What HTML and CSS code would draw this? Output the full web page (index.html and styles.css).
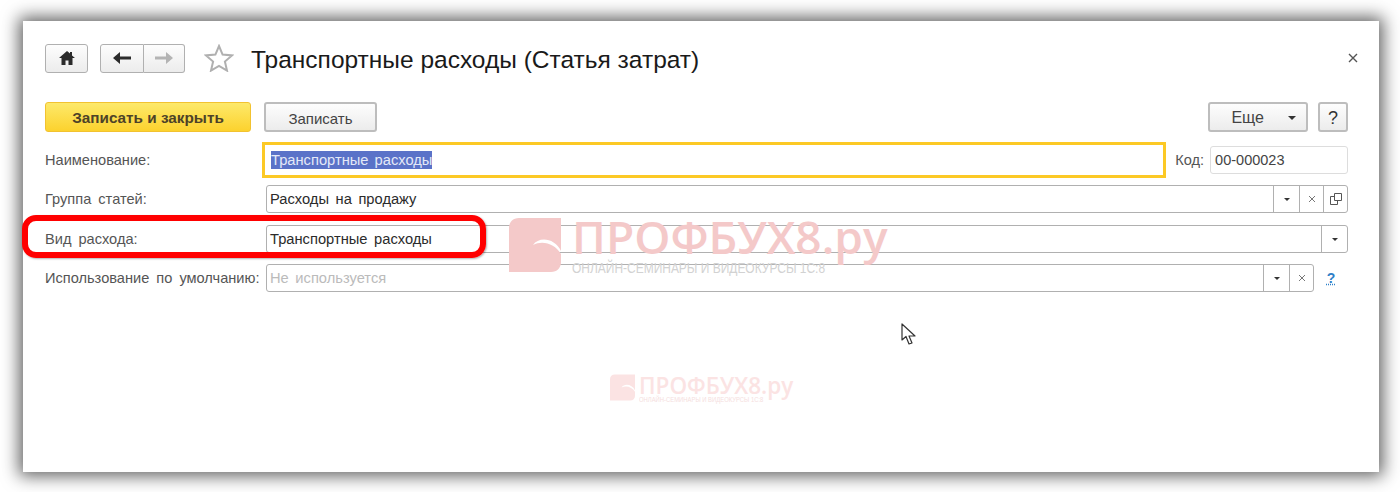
FILE: index.html
```html
<!DOCTYPE html>
<html lang="en">
<head>
  <meta charset="UTF-8">
  <title>Транспортные расходы</title>
  <link rel="stylesheet" href="styles.css">
</head>
<body>
  <div class="window">
    <!-- Title bar -->
    <div class="titlebar">
      <button class="nav-btn home">
        <svg width="16" height="14" viewBox="0 0 16 14"><path d="M8 0 L11 2.6 V1 H13 V4.4 L16 7 H13.5 V14 H9.5 V9.5 H6.5 V14 H2.5 V7 H0 Z" fill="#2b2b2b"/></svg>
      </button>
      <div class="nav-group">
        <button class="nav-btn">
          <svg width="18" height="14" viewBox="0 0 18 14"><path d="M0 7 L7 1 V5.4 H18 V8.6 H7 V13 Z" fill="#2b2b2b"/></svg>
        </button>
        <button class="nav-btn">
          <svg width="18" height="14" viewBox="0 0 18 14"><path d="M18 7 L11 1 V5.4 H0 V8.6 H11 V13 Z" fill="#b4b4b4"/></svg>
        </button>
      </div>
      <svg class="star" width="30" height="28" viewBox="0 0 30 28"><path d="M15 2 L18.6 10.6 L28 11.4 L20.9 17.5 L23 26.6 L15 21.8 L7 26.6 L9.1 17.5 L2 11.4 L11.4 10.6 Z" fill="#fff" stroke="#b0b0b0" stroke-width="2"/></svg>
      <h1 class="title">Транспортные расходы (Статья затрат)</h1>
      <svg class="close" width="10" height="10" viewBox="0 0 10 10"><path d="M1 1 L9 9 M9 1 L1 9" stroke="#555" stroke-width="1.4"/></svg>
    </div>

    <!-- Command bar -->
    <div class="commands">
      <button class="cmd primary">Записать и закрыть</button>
      <button class="cmd save">Записать</button>
      <button class="cmd more">Еще <span class="arrow"></span></button>
      <button class="cmd help">?</button>
    </div>

    <!-- Form -->
    <div class="form">
      <div class="row first">
        <label>Наименование:</label>
        <div class="focus-field"><span class="selected">Транспортные расходы</span></div>
        <label class="code-label">Код:</label>
        <div class="code-field">00-000023</div>
      </div>
      <div class="row">
        <label>Группа статей:</label>
        <div class="field">
          <span class="value">Расходы на продажу</span>
          <span class="fbtn"><span class="arrow small"></span></span>
          <span class="fbtn narrow"><svg width="8" height="8" viewBox="0 0 8 8"><path d="M1 1 L7 7 M7 1 L1 7" stroke="#777"/></svg></span>
          <span class="fbtn narrow"><svg width="12" height="12" viewBox="0 0 12 12"><path d="M4.5 .5 H11.5 V7.5 H4.5 Z M4.5 3.5 H.5 V11.5 H7.5 V7.5" fill="none" stroke="#555"/></svg></span>
        </div>
      </div>
      <div class="row kind">
        <label>Вид расхода:</label>
        <div class="field">
          <span class="value">Транспортные расходы</span>
          <span class="fbtn"><span class="arrow small"></span></span>
        </div>
      </div>
      <div class="row">
        <label>Использование по умолчанию:</label>
        <div class="field">
          <span class="value placeholder">Не используется</span>
          <span class="fbtn"><span class="arrow small"></span></span>
          <span class="fbtn narrow"><svg width="8" height="8" viewBox="0 0 8 8"><path d="M1 1 L7 7 M7 1 L1 7" stroke="#777"/></svg></span>
        </div>
        <a class="hint">?</a>
      </div>
    </div>

    <!-- Overlays -->
    <div class="highlight"></div>
    <div class="mark big">
      <svg width="52" height="54" viewBox="0 0 52 54"><path d="M10 0 H52 V33 C46 20 30 18 24 27 C34 22 46 26 52 36 V44 C52 50 48 54 42 54 H0 V10 C0 4 4 0 10 0 Z" fill="#f4c9c9"/></svg>
      <div class="mark-text">
        <div class="mark-name">ПРОФБУХ8.ру</div>
        <div class="mark-sub">ОНЛАЙН-СЕМИНАРЫ И ВИДЕОКУРСЫ 1С:8</div>
      </div>
    </div>
    <div class="mark small-mark">
      <svg width="25" height="27" viewBox="0 0 52 54"><path d="M10 0 H52 V33 C46 20 30 18 24 27 C34 22 46 26 52 36 V44 C52 50 48 54 42 54 H0 V10 C0 4 4 0 10 0 Z" fill="#fbe3e3"/></svg>
      <div class="mark-text">
        <div class="mark-name">ПРОФБУХ8.ру</div>
        <div class="mark-sub">ОНЛАЙН-СЕМИНАРЫ И ВИДЕОКУРСЫ 1С:8</div>
      </div>
    </div>
    <svg class="cursor" width="16" height="23" viewBox="0 0 16 23"><path d="M1 1 V17 L5 13.5 L8 21 L11 20 L8 13 H14 Z" fill="#fff" stroke="#333" stroke-width="1.2" stroke-linejoin="round"/></svg>
  </div>
</body>
</html>
```

FILE: styles.css
```css
html, body {
  margin: 0;
  padding: 0;
  background-color: #fff;
}
body {
  font-family: "Liberation Sans", Arial, sans-serif;
  font-size: 14px;
  color: #333;
  height: 492px;
  overflow: hidden;
}
button {
  font-family: inherit;
  cursor: pointer;
}

.window {
  position: relative;
  box-sizing: border-box;
  margin: 21px 21px 0 23px;
  height: 451px;
  padding: 22px 31px 0 22px;
  background-color: #fff;
  box-shadow: 0 0 16px 4px rgba(0, 0, 0, .62);
}

/* Title bar */
.titlebar {
  display: flex;
  align-items: center;
  height: 30px;
}
.nav-btn {
  display: flex;
  align-items: center;
  justify-content: center;
  height: 29px;
  padding: 0;
  background: linear-gradient(#fdfdfd, #ececec);
  border: 1px solid #b0b0b0;
  border-radius: 3px;
}
.home {
  width: 43px;
}
.nav-group {
  display: flex;
  margin-left: 12px;
}
.nav-group .nav-btn {
  width: 44px;
  border-radius: 3px 0 0 3px;
}
.nav-group .nav-btn + .nav-btn {
  width: 41px;
  border-left: none;
  border-radius: 0 3px 3px 0;
}
.star {
  margin-left: 19px;
}
.title {
  margin: 4px 0 0 17px;
  font-size: 24.5px;
  font-weight: normal;
  color: #1a1a1a;
}
.close {
  margin-left: auto;
  margin-right: -10px;
}

/* Command bar */
.commands {
  display: flex;
  margin-top: 29px;
}
.cmd {
  height: 30px;
  padding: 2px 0 0;
  font-size: 15px;
  color: #444;
  background: linear-gradient(#fdfdfd, #ececec);
  border: 2px solid #bdbdbd;
  border-radius: 3px;
}
.primary {
  width: 206px;
  font-size: 15.3px;
  font-weight: bold;
  color: #4d4228;
  background: linear-gradient(#fde96a, #fcd22e);
  border: 1px solid #f2c230;
}
.save {
  width: 113px;
  margin-left: 13px;
}
.more {
  display: flex;
  align-items: center;
  justify-content: flex-end;
  gap: 24px;
  width: 100px;
  margin-left: auto;
  padding-right: 10px;
  font-size: 16px;
}
.help {
  width: 30px;
  margin-left: 10px;
  font-size: 18px;
  color: #333;
}
.arrow {
  width: 0;
  height: 0;
  border-left: 4px solid transparent;
  border-right: 4px solid transparent;
  border-top: 4px solid #333;
}
.arrow.small {
  border-left-width: 3px;
  border-right-width: 3px;
  border-top-width: 3px;
}

/* Form */
.form {
  display: flex;
  flex-direction: column;
  gap: 11px;
  margin-top: 14px;
}
.row {
  display: flex;
  align-items: center;
  height: 28px;
}
.row.kind {
  margin-top: 1px;
}
.row label {
  flex: 0 0 221px;
  font-size: 14.6px;
  word-spacing: 3px;
  color: #555;
}
.focus-field {
  display: flex;
  align-items: center;
  box-sizing: border-box;
  width: 905px;
  height: 36px;
  margin-left: -4px;
  padding: 0 6px;
  border: 3px solid #fcc925;
}
.selected {
  font-size: 14.7px;
  line-height: 18px;
  word-spacing: 2px;
  color: #e4e9f8;
  background-color: #5a72c8;
}
.row .code-label {
  flex: 0 0 auto;
  margin-left: 9px;
  word-spacing: 0;
}
.code-field {
  box-sizing: border-box;
  width: 138px;
  height: 28px;
  margin-left: 6px;
  padding: 0 4px;
  font-size: 14.5px;
  line-height: 26px;
  color: #444;
  border: 1px solid #ddd;
  border-radius: 3px;
}
.field {
  flex: 1;
  display: flex;
  box-sizing: border-box;
  height: 28px;
  line-height: 26px;
  background-color: #fff;
  border: 1px solid #b0b0b0;
  border-radius: 3px;
}
.value {
  flex: 1;
  padding-left: 3px;
  font-size: 14.7px;
  word-spacing: 2.5px;
  color: #2b2b2b;
}
.placeholder {
  color: #bbb;
}
.fbtn {
  display: flex;
  align-items: center;
  justify-content: center;
  width: 25px;
  border-left: 1px solid #b0b0b0;
}
.fbtn.narrow {
  width: 23px;
}
.hint {
  flex: 0 0 34px;
  text-align: center;
  font-size: 14px;
  font-weight: bold;
  color: #2f80c8;
  text-decoration: underline dotted;
}

/* Things lying over the form */
.highlight {
  position: absolute;
  left: -1px;
  top: 194px;
  box-sizing: border-box;
  width: 464px;
  height: 43px;
  border: 6px solid #f00;
  border-radius: 14px;
  box-shadow: 1px 1px 2px rgba(0, 0, 0, .3);
}
.mark {
  position: absolute;
  display: flex;
  pointer-events: none;
}
.mark-sub {
  white-space: nowrap;
  transform-origin: left center;
}
.mark.big {
  left: 486px;
  top: 197px;
  gap: 11px;
}
.mark-name {
  font-family: "Open Sans", sans-serif;
  font-weight: 600;
  color: #f4c9c9;
}
.mark.big .mark-name {
  font-size: 46px;
  line-height: 46px;
  margin-top: -5px;
}
.mark.big .mark-sub {
  margin-top: 1px;
  font-size: 14px;
  line-height: 16px;
  color: #d2d2d2;
  transform: scaleX(.855);
}
.mark.small-mark {
  left: 587px;
  top: 353px;
  gap: 4px;
}
.small-mark .mark-name {
  font-size: 22.5px;
  line-height: 23px;
  color: #fbe3e3;
}
.small-mark .mark-sub {
  margin-top: -1px;
  font-size: 7px;
  line-height: 7px;
  color: #f5dede;
  transform: scaleX(.84);
}
.cursor {
  position: absolute;
  left: 878px;
  top: 302px;
}
```
